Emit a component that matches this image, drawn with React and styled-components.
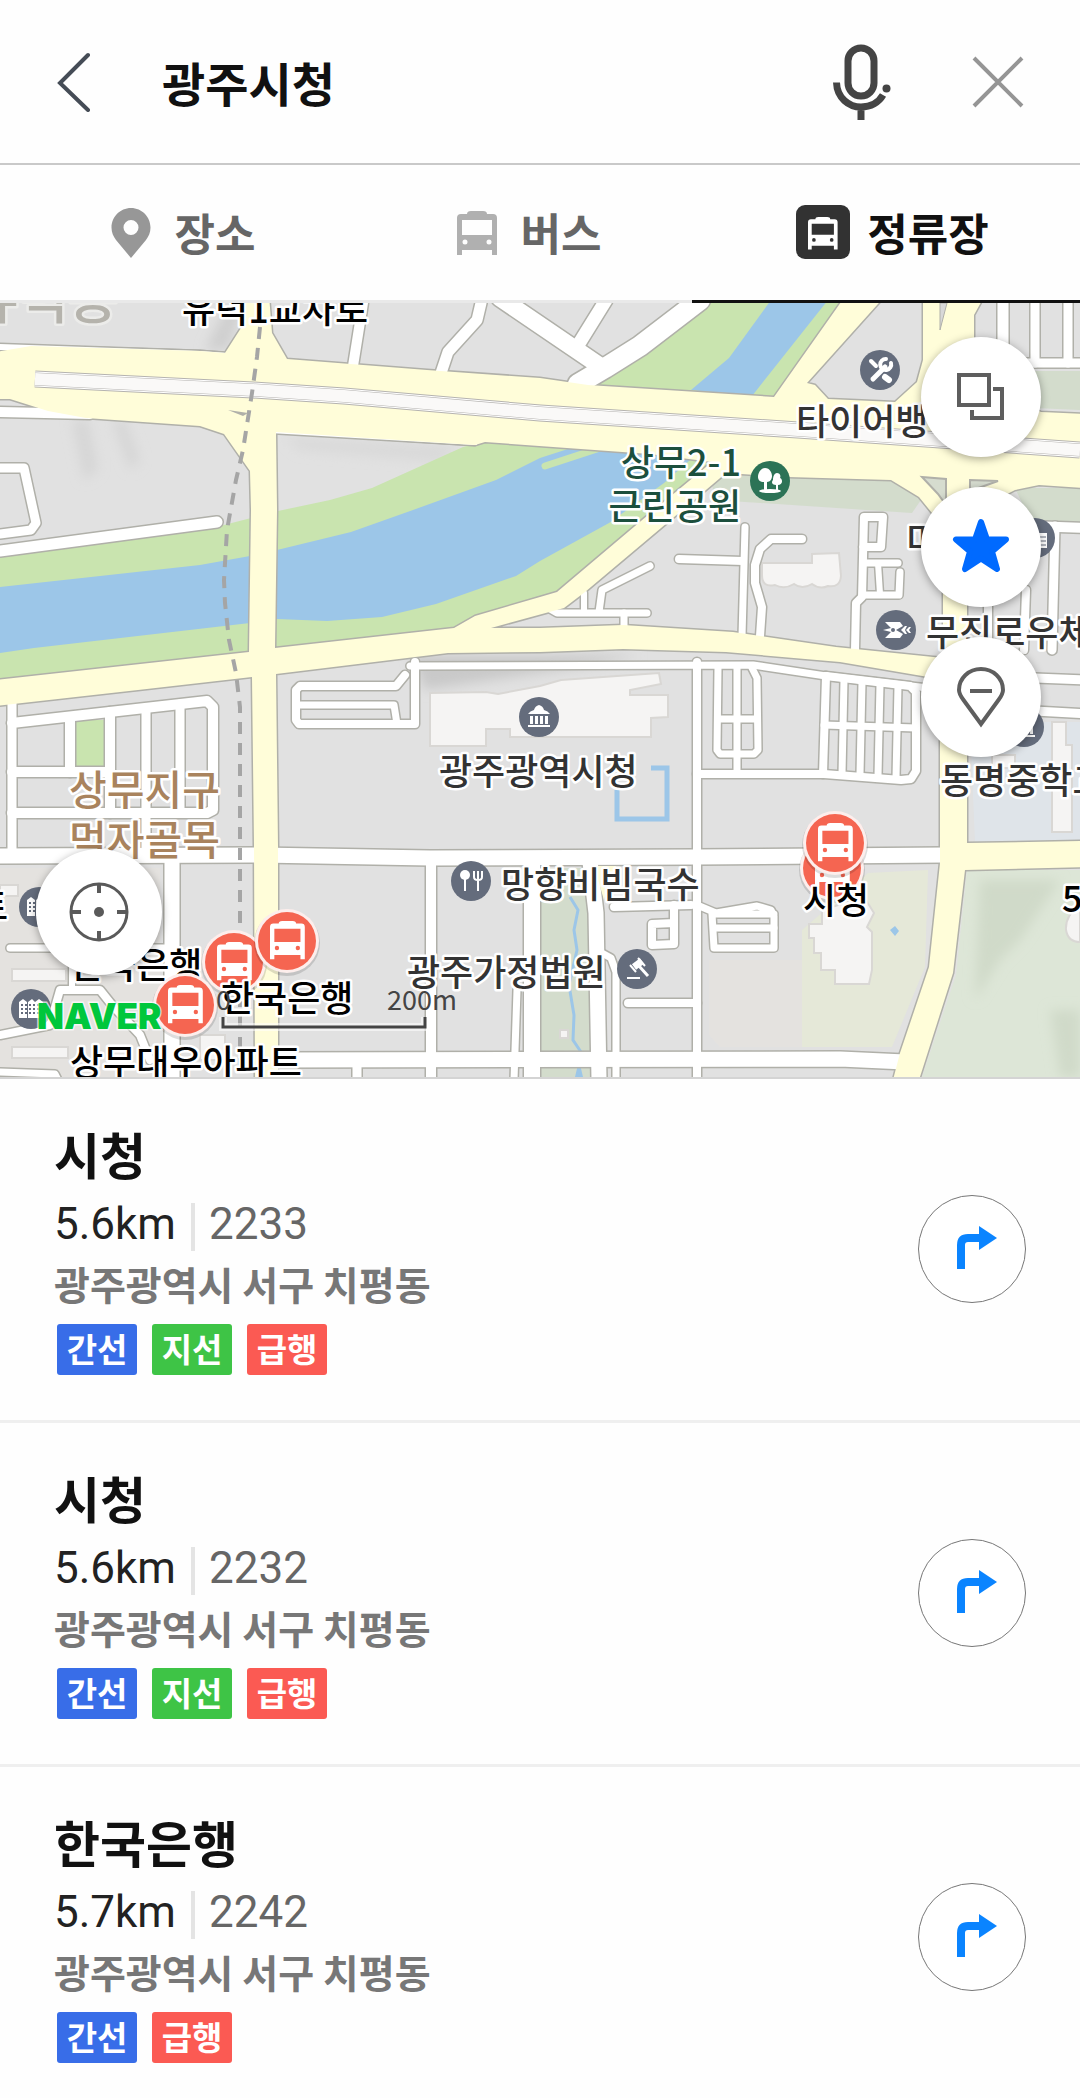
import React, { useState } from "react";
import styled, { createGlobalStyle, css } from "styled-components";

const GlobalStyle = createGlobalStyle`
  *, *::before, *::after { box-sizing: border-box; }
  body {
    margin: 0;
    background: #fefefe;
    color: #111;
    font-family: "Noto Sans CJK KR", "Noto Sans", sans-serif;
  }
  button, input { font: inherit; color: inherit; }
`;

const Page = styled.div`
  display: flex;
  flex-direction: column;
  height: 100vh;
  overflow: hidden;
  background: #fefefe;
`;

const Header = styled.header`
  display: flex;
  flex: none;
  align-items: center;
  height: 165px;
  padding: 0 46px 0 38px;
  border-bottom: 2px solid #c9c9c9;
`;

const IconButton = styled.button`
  display: grid;
  flex: none;
  place-items: center;
  width: 72px;
  height: 80px;
  padding: 0;
  border: 0;
  background: none;
  cursor: pointer;
`;

const SearchInput = styled.input`
  flex: 1;
  min-width: 0;
  height: 72px;
  margin: 0 20px 0 52px;
  padding: 0;
  border: 0;
  outline: 0;
  background: none;
  font-size: 47px;
  font-weight: 700;
`;

const HeaderActions = styled.div`
  display: flex;
  gap: 65px;
`;

const Tabs = styled.nav`
  display: grid;
  flex: none;
  grid-template-columns: 346fr 346fr 388fr;
  height: 138px;
`;

const Tab = styled.button`
  display: flex;
  align-items: center;
  justify-content: center;
  gap: 17px;
  padding: 0 0 2px 13px;
  border: 0;
  border-bottom: 3px solid ${(p) => (p.$active ? "#111" : "#e9e9e9")};
  background: none;
  color: ${(p) => (p.$active ? "#111" : "#666")};
  font-size: 44px;
  font-weight: 700;
  line-height: 64px;
  cursor: pointer;
`;

const TabIcon = styled.svg`
  width: 54px;
  height: 54px;
`;

const MapArea = styled.section`
  position: relative;
  flex: none;
  border-bottom: 2px solid #d4d4d4;
`;

const MapSvg = styled.svg`
  display: block;
  width: 100%;
  height: auto;
`;

const MapLabel = styled.text`
  font-family: "Noto Sans CJK KR", sans-serif;
  font-size: 36px;
  font-weight: 500;
  fill: ${(p) => p.$color || "#333"};
  stroke: #fff;
  stroke-width: 5px;
  stroke-linejoin: round;
  paint-order: stroke;
`;

const AreaLabel = styled(MapLabel)`
  font-size: 41px;
`;

const DistrictLabel = styled(MapLabel)`
  font-size: 54px;
  stroke: #ececea;
`;

const ScaleText = styled.text`
  font-family: "Noto Sans CJK KR", sans-serif;
  font-size: 27px;
  fill: #444;
`;

const Wordmark = styled.text`
  font-family: Inter, sans-serif;
  font-size: 35px;
  font-weight: 900;
  fill: #00c73c;
  stroke: #ffffffb0;
  stroke-width: 3px;
  paint-order: stroke;
`;

const roundButton = css`
  display: grid;
  place-items: center;
  padding: 0;
  border: 0;
  border-radius: 50%;
  background: #fff;
  box-shadow: 0 2px 8px rgba(0, 0, 0, 0.35);
  cursor: pointer;
`;

const MapTools = styled.div`
  position: absolute;
  top: 34px;
  right: 39px;
  display: flex;
  flex-direction: column;
  gap: 30px;
`;

const MapTool = styled.button`
  ${roundButton}
  width: 120px;
  height: 120px;
`;

const LocateButton = styled.button`
  ${roundButton}
  position: absolute;
  bottom: 102px;
  left: 36px;
  width: 126px;
  height: 126px;
`;

const StopList = styled.ul`
  flex: 1;
  min-height: 0;
  margin: 0;
  padding: 0;
  overflow-y: auto;
  list-style: none;
  scrollbar-width: none;
`;

const StopRow = styled.li`
  display: flex;
  align-items: center;
  justify-content: space-between;
  padding: 44px 54px 45px;
  border-bottom: 3px solid #efefef;
`;

const StopName = styled.h2`
  margin: 0 0 20px;
  font-size: 50px;
  font-weight: 700;
  line-height: 60px;
`;

const Meta = styled.div`
  display: flex;
  gap: 15px;
  height: 48px;
  font-family: Roboto, sans-serif;
  font-size: 44px;
  line-height: 42px;
`;

const Distance = styled.span`
  color: #222;
`;

const StopNumber = styled.span`
  padding-left: 14px;
  border-left: 4px solid #e4e4e4;
  color: #666;
`;

const Address = styled.p`
  margin: 8px 0 17px;
  color: #777;
  font-size: 39px;
  font-weight: 700;
  line-height: 48px;
`;

const Tags = styled.div`
  display: flex;
  gap: 15px;
  padding-left: 3px;
`;

const tagColors = { 간선: "#386de8", 지선: "#3ec446", 급행: "#fb5a53" };

const Tag = styled.span`
  width: 80px;
  height: 51px;
  border-radius: 3px;
  background: ${(p) => tagColors[p.$kind]};
  color: #fff;
  font-size: 33px;
  font-weight: 700;
  line-height: 48px;
  text-align: center;
`;

const RouteButton = styled.button`
  display: grid;
  flex: none;
  place-items: center;
  width: 108px;
  height: 108px;
  padding: 0;
  border: 1px solid #777;
  border-radius: 50%;
  background: #fff;
  cursor: pointer;
`;

const busPath =
  "M0 44V7Q0 3 4 3H10Q10 0 14 0H26Q30 0 30 3H36Q40 3 40 7V44H35V39H5V44ZM5 9V24H35V9ZM8 28.500A2.500 2.500 0 1 0 8 33.500A2.500 2.500 0 1 0 8 28.500ZM32 28.500A2.500 2.500 0 1 0 32 33.500A2.500 2.500 0 1 0 32 28.500Z";

const Bus = ({ x, y, s = 1, color }) => (
  <path d={busPath} fillRule="evenodd" fill={color} transform={`translate(${x} ${y}) scale(${s})`} />
);

/* White streets: [points, width] */
const streets = [
  ["0,347 200,354 228,356", 6],
  ["0,412 90,414", 10],
  ["270,430 475,442", 6],
  ["363,303 353,366", 10],
  ["481,303 477,320 448,352 440,376", 11],
  ["500,298 600,366", 17],
  ["606,300 580,342", 13],
  ["700,300 640,346 605,368 578,384", 20],
  ["0,468 24,468 36,523 31,530 0,534", 9],
  ["0,551 217,522", 11],
  ["410,666 753,665 826,676 945,690", 7],
  ["415,662 415,724 299,724 296,720 296,690 300,686 396,686 405,675", 8],
  ["300,705 394,705 397,724", 7],
  ["12,700 12,855", 9],
  ["12,723 207,701 213,707 213,810 207,813 12,813", 10],
  ["12,772 110,772", 10],
  ["70,718 70,772", 10],
  ["110,712 110,813", 10],
  ["146,708 146,855", 9],
  ["180,704 180,813", 9],
  ["0,856 260,855 430,858 697,857 945,855", 15],
  ["172,860 172,1080", 15],
  ["431,858 431,1080", 10],
  ["275,1060 840,1059 905,1062", 15],
  ["357,1060 357,1080", 9],
  ["532,862 532,1080", 16],
  ["517,990 514,1080", 7],
  ["590,862 596,913 599,1080", 15],
  ["600,952 611,958 616,972 616,1080", 7],
  ["697,662 697,1080", 8],
  ["718,668 717,750 720,754 754,754 758,750 757,678 752,668", 7],
  ["737,668 737,774", 7],
  ["718,719 757,719", 7],
  ["697,774 824,774 901,780 911,779 916,771 916,692 910,686 826,676", 8],
  ["826,676 823,774", 8],
  ["844,680 842,774", 7],
  ["862,682 860,774", 7],
  ["880,684 878,776", 7],
  ["898,686 896,778", 7],
  ["824,725 916,728", 7],
  ["745,527 742,636", 7],
  ["679,559 743,561", 8],
  ["802,539 771,539 760,549 755,565 755,583 762,607 760,636", 8],
  ["855,650 856,603 862,597 864,517 883,517 881,547 863,547", 8],
  ["865,563 898,563", 7],
  ["878,563 880,594", 6],
  ["863,595 899,595 900,572", 7],
  ["650,566 602,590 599,612", 7],
  ["584,593 584,613", 6],
  ["543,605 557,613 647,613", 7],
  ["624,613 624,630", 7],
  ["1003,300 1003,363", 11],
  ["1035,300 1035,363", 9],
  ["1068,300 1068,363", 9],
  ["1000,363 1090,363", 9],
  ["1030,526 1090,528", 10],
  ["1055,526 1052,650", 9],
  ["1026,590 1024,650", 8],
  ["988,590 988,650", 8],
  ["1035,678 1090,680", 9],
  ["1035,711 1090,714", 9],
  ["614,907 691,905", 8],
  ["674,905 674,944 652,945 652,924 674,923", 8],
  ["628,1003 697,1003", 8],
  ["697,905 716,913 757,906 771,910 774,916 774,948 714,948 712,914 774,914", 7],
  ["714,928 774,928", 7],
  ["10,948 172,948", 7],
  ["0,1035 50,1025 60,990 100,990 112,1005 140,1035 150,1060", 8],
  ["72,948 72,990", 6],
  ["0,1072 55,1074 58,1080", 7],
];

/* Yellow arterial roads as one closed shape with cut-out blocks */
const arterial =
  "M-5 352 31 346 200 351 225 353 241 328 246 295H269L272 333 287 359 427 370 540 378 588 385 774 397 846 295H886L807 383 815 385 828 399 895 402 917 382 923 360V295H985L974 315V380L1041 412 1085 414V488L1039 485 1015 490 967 515V753 843L1085 841V867L965 870 953 973 919 1080H893L900 1053 929 967 940 863V679L840 662 726 652 623 649 540 652 448 653 276 674 278 847V1080H255L254 847 252 677 138 690 -5 706V680L249 652 251 510 250 471 224 434 200 426 86 418 48 411 10 399H-5ZM276 432 277 510 275 648 454 628 475 616 540 597 557 592 654 510 712 462 650 454 485 442 475 445ZM726 473 667 523 585 592 564 608 491 628 540 628 623 625 733 632 836 647 943 658V530L932 513 919 497 891 480 788 477Z";

const Streets = ({ casing }) => (
  <g fill="none" strokeLinejoin="round" strokeLinecap="round" stroke={casing ? "#b0b0a9" : "#fff"}>
    {streets.map(([points, w]) => (
      <polyline key={points} points={points} strokeWidth={casing ? w + 3 : w} />
    ))}
  </g>
);

const poiGlyphs = {
  wrench: (
    <g stroke="#fff" fill="none" strokeLinecap="round">
      <path d="M-7 9L5-3" strokeWidth="5" />
      <path d="M11-7A5.500 5.500 0 1 1 6-11" strokeWidth="4" />
      <path d="M-9-9L-4-4" strokeWidth="4" />
      <path d="M5 7L9 10" strokeWidth="6" />
    </g>
  ),
  tree: (
    <g fill="#fff">
      <path d="M-5-13C0-13 2-8 2-5C2-2 0 1-3 1V9H-6V1C-10 1-12-1-12-4C-12-8-9-13-5-13Z" />
      <path d="M7-8C10-8 11-5 10-3C13-2 13 4 8 4V9H6V4C2 4 1 1 3-1C3-4 4-8 7-8Z" />
      <ellipse cx="0" cy="10" rx="11" ry="2" />
    </g>
  ),
  mail: (
    <g fill="#fff">
      <path d="M-11-8H4L7-4 0 0 7 4 4 8H-11L-5 2-13 0-5-2Z" />
      <path d="M5 0L9-4H11L9 0 11 4H9ZM10 0L13-3H15L13 0 15 3H13Z" />
      <circle cx="-3" cy="0" r="2" fill="#646c7c" />
    </g>
  ),
  hall: (
    <path
      fill="#fff"
      d="M-11-3Q-9-6-5-7Q-4-11 0-12Q4-11 5-7Q9-6 11-3ZM-9-1h3v8h-3zM-4-1h3v8h-3zM1-1h3v8H1zM6-1h3v8H6zM-11 8h22v2h-22z"
    />
  ),
  food: (
    <g>
      <circle cx="-6" cy="-6" r="5" fill="#fff" />
      <path d="M-6-3V10M7-2V10M3-10V-4Q3-1 7-1Q11-1 11-4V-10M7-10V-2" stroke="#fff" strokeWidth="2" fill="none" />
    </g>
  ),
  gavel: (
    <g stroke="#fff" fill="none">
      <path d="M-3-2L5-8" strokeWidth="7" />
      <path d="M1-11L8-3M-7-4L-1 3" strokeWidth="2" />
      <path d="M2-3L11 7" strokeWidth="3" />
      <path d="M-10 9H3" strokeWidth="2" />
    </g>
  ),
  building: (
    <g>
      <path d="M-12 9V-7L-8-10-4-7V9ZM-3 9V-7L1-10 4-7 8-10 12-7V9Z" fill="#fff" />
      <path d="M-10-4H11M-10 0H11M-10 4H11" stroke="#646c7c" strokeWidth="2" strokeDasharray="2 2" />
    </g>
  ),
  page: (
    <g>
      <path d="M4-5H12V10H4Z" fill="#fff" />
      <path d="M4-1H11M4 3H11M4 7H11" stroke="#646c7c" strokeWidth="1" />
    </g>
  ),
};

const Poi = ({ x, y, kind, color = "#646c7c" }) => (
  <g transform={`translate(${x} ${y})`}>
    <circle r="20" fill={color} />
    {poiGlyphs[kind]}
  </g>
);

const StopPin = ({ x, y }) => (
  <g>
    <circle cx={x} cy={y + 2} r="33" fill="#0002" />
    <circle cx={x} cy={y} r="32" fill="#fdeeec" />
    <circle cx={x} cy={y} r="29" fill="#f56551" />
    <Bus x={x - 17} y={y - 20} s={0.87} color="#fff" />
  </g>
);

function CityMap() {
  return (
    <MapSvg viewBox="0 303 1080 774" role="img" aria-label="지도">
      <defs>
        <filter id="soft" x="-20%" y="-20%" width="140%" height="140%">
          <feGaussianBlur stdDeviation="6" />
        </filter>
      </defs>
      <rect x="0" y="303" width="1080" height="774" fill="#e1e1e1" />
      <g filter="url(#soft)">
        <path d="M72 420 84 480 98 470 88 420M112 420 130 470 140 460 125 420" fill="#d6d6d6" />
        <path d="M225 310H242L228 350H205Z" fill="#cfcfcf" />
        <path d="M410 655H640L600 664 425 690Z" fill="#c9c9c9" />
        <path d="M285 437 460 446 440 462 300 450Z" fill="#d9d9d9" />
      </g>
      {/* river and its banks */}
      <path
        fill="#c9e4af"
        d="M0 557 224 525 278 511 330 500 372 488 463 447 482 442 720 450 712 462 654 510 557 592 454 630 250 655 0 682ZM588 388 640 346 702 300H850L774 400Z"
      />
      <path
        fill="#9cc6e8"
        d="M0 587 200 565 250 556 277 550 351 532 413 510 496 480 540 458 571 448H640L690 460 664 483 609 523 540 561 516 576 436 604 382 617 327 621 277 619 250 623 34 648 0 653ZM691 390 729 358 771 300H828L752 396Z"
      />
      <path d="M545 466 600 448" stroke="#c9e4af" strokeWidth="7" strokeLinecap="round" />
      {/* parks, school and yards */}
      <path fill="#d3dccc" d="M710 474 893 480 921 500 912 513 715 500ZM1035 371H1080V410L1035 408ZM1015 488H1080V522L1030 520ZM540 868H582L590 915V1077H540Z" />
      <path fill="#dde6d7" d="M967 870H1080V1077H922L956 975Z" />
      <path fill="#d0dac9" filter="url(#soft)" d="M980 880H1060L1020 940 1000 960 975 1000ZM1050 1010H1080V1077H1060Z" />
      <path fill="#dfe4e9" d="M970 722H1080V842H975Z" />
      <path fill="#e4e2df" d="M709 960H802V1047H720L709 1035ZM0 868H160V1077H0Z" />
      <path fill="#e5e8d8" d="M802 930 868 873 928 870 925 967 892 1047H802Z" />
      <rect x="76" y="720" width="28" height="46" fill="#c9e4af" />
      <g fill="#f5f4f3" stroke="#d9d7d4" strokeWidth="2">
        <path d="M430 693 486 692 498 694 540 686 561 680 659 673 661 684 630 690V695L668 695V717L651 718V737H510V729H486V746H430Z" />
        <path d="M762 563H812V554L839 553 841 576Q840 588 828 586Q820 590 812 584Q802 590 794 584Q784 590 775 585Q762 588 762 575Z" />
        <path d="M822 910 864 897 874 913 867 927 872 932V970L869 984H835V970H821V953H814V938H809V924H822Z" />
        <path d="M1052 722H1066V745H1072V832H1052ZM992 755H1015V768H992ZM1080 905Q1065 915 1066 930Q1068 942 1080 942Z" />
        <path d="M0 885H18V896H0ZM12 969H66V981H12ZM12 1047H68V1058H12ZM25 905H40V915H25ZM200 1035H225V1060H200ZM560 1030H568V1038H560Z" />
      </g>
      <path d="M651 768H667V819H617V790" fill="none" stroke="#9cc6e8" strokeWidth="5" />
      <path d="M570 897 578 910 574 930 577 950 569 985 574 1015 573 1040 581 1052 578 1077" fill="none" stroke="#9cc6e8" strokeWidth="3" />
      <path d="M579 1060 583 1077H575ZM890 930 895 926 899 931 895 936Z" fill="#9cc6e8" />
      {/* roads: outlines first, then surfaces */}
      <Streets casing />
      <path d={arterial} fill="none" stroke="#b0b0a9" strokeWidth="3" strokeLinejoin="round" />
      <Streets />
      <path d={arterial} fill="#fffdd9" fillRule="evenodd" />
      <path d="M940 303H947L940 330Z" fill="#d8d8d8" stroke="#b0b0a9" strokeWidth="1" />
      <path d="M922 477 946 479V505L938 494ZM970 480 998 481 970 491Z" fill="#d6dccf" stroke="#b0b0a9" strokeWidth="2" />
      <path d="M594 866H616L608 885 604 900Z" fill="#fffdd9" />
      <g fill="none">
        <path d="M35 379 253 390 344 396 540 413 798 430 1080 450" stroke="#b5b3b0" strokeWidth="17" />
        <path d="M35 379 253 390 344 396 540 413 798 430 1080 450" stroke="#fff" strokeWidth="15" />
        <path d="M35 379 253 390 344 396 540 413 798 430 1080 450" stroke="#b5b3b0" strokeWidth="13" />
        <path d="M35 379 253 390 344 396 540 413 798 430 1080 450" stroke="#faf9f8" strokeWidth="12" />
        <path
          d="M260 327 257 357 252 393 243 450 236 480 227 530 224 580 225 603 229 640 236 673 240 707V1077"
          stroke="#a5a5a5"
          strokeWidth="4"
          strokeDasharray="12 9"
        />
      </g>
      <path d="M228 410 248 413 243 416Z" fill="#b0b0a9" />

      <Poi x={880} y={370} kind="wrench" />
      <Poi x={770} y={481} kind="tree" color="#2c7356" />
      <Poi x={896} y={630} kind="mail" />
      <Poi x={1035} y={538} kind="page" />
      <Poi x={539} y={717} kind="hall" />
      <Poi x={1024} y={727} kind="hall" />
      <Poi x={471} y={881} kind="food" />
      <Poi x={637} y={969} kind="gavel" />
      <Poi x={39} y={907} kind="building" />
      <Poi x={31} y={1009} kind="building" />

      <DistrictLabel x={118} y={319} textAnchor="end" $color="#b5b3ac">유덕동</DistrictLabel>
      <MapLabel x={182} y={323} $color="#000">유덕1교차로</MapLabel>
      <MapLabel x={796} y={435}>타이어뱅</MapLabel>
      <MapLabel x={741} y={476} textAnchor="end" $color="#1c4f3d">상무2-1</MapLabel>
      <MapLabel x={741} y={520} textAnchor="end" $color="#1c4f3d">근린공원</MapLabel>
      <MapLabel x={906} y={553}>미</MapLabel>
      <MapLabel x={926} y={646}>무진로우체</MapLabel>
      <MapLabel x={439} y={785}>광주광역시청</MapLabel>
      <MapLabel x={940} y={794}>동명중학교</MapLabel>
      <AreaLabel x={69} y={805} $color="#a9835d">상무지구</AreaLabel>
      <AreaLabel x={69} y={855} $color="#a9835d">먹자골목</AreaLabel>
      <MapLabel x={501} y={898}>망향비빔국수</MapLabel>
      <MapLabel x={407} y={986}>광주가정법원</MapLabel>
      <MapLabel x={8} y={920} textAnchor="end" $color="#000">트</MapLabel>
      <MapLabel x={1062} y={912} $color="#000">5</MapLabel>
      <MapLabel x={70} y={1076} $color="#000">상무대우아파트</MapLabel>

      <StopPin x={832} y={868} />
      <StopPin x={835} y={843} />
      <MapLabel x={803} y={914} $color="#000">시청</MapLabel>
      <MapLabel x={70} y={979} $color="#000">한국은행</MapLabel>
      <StopPin x={234} y={962} />
      <StopPin x={287} y={941} />
      <StopPin x={185} y={1005} />
      <MapLabel x={221} y={1012} $color="#000">한국은행</MapLabel>

      <Wordmark x={37} y={1029}>NAVER</Wordmark>
      <ScaleText x={216} y={1010}>0</ScaleText>
      <ScaleText x={387} y={1010}>200m</ScaleText>
      <path d="M223 1017V1027H425V1017" fill="none" stroke="#fff8" strokeWidth="8" />
      <path d="M223 1017V1027H425V1017" fill="none" stroke="#444" strokeWidth="3" />
    </MapSvg>
  );
}

const stops = [
  { name: "시청", distance: "5.6km", number: "2233", tags: ["간선", "지선", "급행"] },
  { name: "시청", distance: "5.6km", number: "2232", tags: ["간선", "지선", "급행"] },
  { name: "한국은행", distance: "5.7km", number: "2242", tags: ["간선", "급행"] },
];

const tabs = [
  {
    label: "장소",
    icon: (
      <path
        fill="#979797"
        fillRule="evenodd"
        d="M27 3C16 3 7.500 12 7.500 22.500C7.500 28 9.500 31.500 12 35L27 53 42 35C44.500 31.500 46.500 28 46.500 22.500C46.500 12 38 3 27 3ZM27 15A7.500 7.500 0 1 1 27 30A7.500 7.500 0 1 1 27 15Z"
      />
    ),
  },
  { label: "버스", icon: <Bus x={7} y={6} color="#b0b0b0" /> },
  {
    label: "정류장",
    icon: (
      <g>
        <rect width="54" height="54" rx="9" fill="#323232" />
        <Bus x={12} y={12} s={0.74} color="#fff" />
      </g>
    ),
  },
];

export default function App() {
  const [query, setQuery] = useState("광주시청");
  const [active, setActive] = useState("정류장");

  return (
    <Page>
      <GlobalStyle />
      <Header>
        <IconButton type="button" aria-label="뒤로">
          <svg width="36" height="60" viewBox="0 0 36 60" fill="none" stroke="#454c56" strokeWidth="4" strokeLinecap="round">
            <path d="M32 3L4 31 32 58" />
          </svg>
        </IconButton>
        <SearchInput aria-label="검색어" value={query} onChange={(e) => setQuery(e.target.value)} />
        <HeaderActions>
          <IconButton type="button" aria-label="음성 검색">
            <svg width="60" height="78" viewBox="0 0 60 78" fill="none" stroke="#444" strokeWidth="7">
              <rect x="17" y="5" width="26" height="48" rx="13" />
              <path d="M5.500 39.500C6 55 18 64 30 64C40 64 48 59 52 52M30 64V77" />
              <circle cx="55.500" cy="45.500" r="4" fill="#444" stroke="none" />
            </svg>
          </IconButton>
          <IconButton type="button" aria-label="지우기">
            <svg width="52" height="52" viewBox="0 0 52 52" stroke="#959595" strokeWidth="4">
              <path d="M2 2L50 50M50 2L2 50" />
            </svg>
          </IconButton>
        </HeaderActions>
      </Header>

      <Tabs>
        {tabs.map((t) => (
          <Tab key={t.label} type="button" $active={t.label === active} onClick={() => setActive(t.label)}>
            <TabIcon viewBox="0 0 54 54" aria-hidden="true">{t.icon}</TabIcon>
            {t.label}
          </Tab>
        ))}
      </Tabs>

      <MapArea>
        <CityMap />
        <MapTools>
          <MapTool type="button" aria-label="지도 종류">
            <svg width="50" height="50" viewBox="0 0 50 50" fill="none" stroke="#5e5e5e" strokeWidth="4">
              <path d="M3 3H33V33H3ZM37 17H46V46H16V38" />
            </svg>
          </MapTool>
          <MapTool type="button" aria-label="즐겨찾기">
            <svg width="58" height="58" viewBox="0 2 58 58" fill="#006aff" stroke="#006aff" strokeWidth="6" strokeLinejoin="round">
              <path d="M29 6L35 23.500H54L40 35.500 45 53 29 42.500 13 53 18 35.500 4 23.500H23Z" />
            </svg>
          </MapTool>
          <MapTool type="button" aria-label="장소 표시">
            <svg width="50" height="62" viewBox="0 0 50 62" fill="none" stroke="#5e5e5e" strokeWidth="4">
              <path d="M25 58L7.500 34C4.500 30 3 27 3 24C3 12 13 3 25 3C37 3 47 12 47 24C47 27 45.500 30 42.500 34ZM14 25H36" />
            </svg>
          </MapTool>
        </MapTools>
        <LocateButton type="button" aria-label="현재 위치">
          <svg width="60" height="60" viewBox="0 0 60 60" fill="none" stroke="#5a5a5a" strokeWidth="3">
            <circle cx="30" cy="30" r="28" />
            <path d="M30 2V11M30 49V58M2 30H12M48 30H58" strokeWidth="4" />
            <circle cx="30" cy="30" r="5" fill="#5a5a5a" stroke="none" />
          </svg>
        </LocateButton>
      </MapArea>

      <StopList>
        {stops.map((s) => (
          <StopRow key={s.number}>
            <div>
              <StopName>{s.name}</StopName>
              <Meta>
                <Distance>{s.distance}</Distance>
                <StopNumber>{s.number}</StopNumber>
              </Meta>
              <Address>광주광역시 서구 치평동</Address>
              <Tags>
                {s.tags.map((t) => (
                  <Tag key={t} $kind={t}>{t}</Tag>
                ))}
              </Tags>
            </div>
            <RouteButton type="button" aria-label="길찾기">
              <svg width="56" height="46" viewBox="-13 0 56 46">
                <path d="M4 43V19Q4 12 11 12H24" fill="none" stroke="#0a84ff" strokeWidth="8" />
                <path d="M22 0L40 12 22 24Z" fill="#0a84ff" />
              </svg>
            </RouteButton>
          </StopRow>
        ))}
      </StopList>
    </Page>
  );
}
